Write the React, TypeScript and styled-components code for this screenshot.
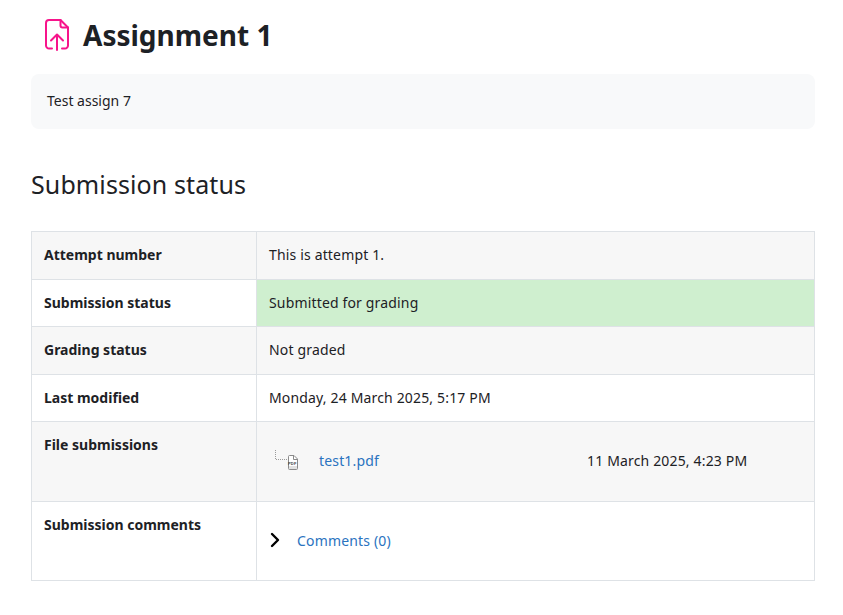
import React from "react";
import styled, { createGlobalStyle } from "styled-components";

const Global = createGlobalStyle`
  html, body { margin: 0; padding: 0; background: #fff; }
  body { font-family: "Noto Sans", "Open Sans", sans-serif; font-size: 14px; color: #1d2125; }
`;
const Page = styled.div`
  width: 784px;
  padding: 16px 0 0 31px;
`;
const Header = styled.header`
  display: flex;
  align-items: center;
  gap: 13px;
  height: 38px;
  padding-left: 13px;
`;
const Title = styled.h1`
  margin: 0;
  font-size: 28px;
  font-weight: 700;
  line-height: 38px;
`;
const Intro = styled.div`
  margin-top: 20px;
  height: 55px;
  box-sizing: border-box;
  padding: 17px 16px 0;
  line-height: 19px;
  background: #f8f9fa;
  border-radius: 8px;
`;
const Heading = styled.h2`
  margin: 38px 0 30px;
  font-size: 25px;
  font-weight: 400;
  line-height: 34px;
  letter-spacing: 0.1px;
`;
const Table = styled.table`
  width: 784px;
  border-collapse: collapse;
  table-layout: fixed;
  border: 1px solid #dee2e6;
`;
const Row = styled.tr<{ $h: number; $shade?: boolean }>`
  height: ${(p) => p.$h}px;
  background: ${(p) => (p.$shade ? "#f7f7f7" : "#fff")};
`;
const Th = styled.th<{ $top?: boolean }>`
  width: 225px;
  box-sizing: border-box;
  padding: ${(p) => (p.$top ? "13px 12px 0" : "0 12px 2px")};
  text-align: left;
  vertical-align: ${(p) => (p.$top ? "top" : "middle")};
  font-weight: 700;
  border: 1px solid #dee2e6;
`;
const Td = styled.td<{ $ok?: boolean }>`
  padding: 0 12px 2px;
  vertical-align: middle;
  letter-spacing: 0.16px;
  border: 1px solid #dee2e6;
  background: ${(p) => (p.$ok ? "#cfefcf" : "transparent")};
`;
const FileRow = styled.div`
  display: flex;
  align-items: center;
  padding-left: 6px;
`;
const FileName = styled.a`
  color: #2a73c0;
  margin-left: 20px;
  width: 268px;
`;
const FileDate = styled.span``;
const CommentRow = styled.div`
  display: flex;
  align-items: center;
  gap: 16px;
`;
const Link = styled.a`
  color: #2a73c0;
`;

const AssignIcon = () => (
  <svg width="26" height="32" viewBox="0 0 26 32" fill="none" stroke="#f7148b" strokeWidth="2" strokeLinecap="round" strokeLinejoin="round">
    <path d="M8 29.5H5a3 3 0 0 1-3-3V4a3 3 0 0 1 3-3h11.5l7.5 7.5v18a3 3 0 0 1-3 3h-3" />
    <path d="M16.5 1v5.5a2 2 0 0 0 2 2H24" />
    <path d="M13 31V16M7 21.5l6-6 6 6" />
  </svg>
);
const TreeFile = () => (
  <svg width="24" height="22" viewBox="0 0 24 22" fill="none">
    <path d="M0.5 0v9M1 9.5h11" stroke="#9a9a9a" strokeDasharray="1 1" />
    <path d="M14.5 5.5h4.5l3.5 3.5v9.5a1 1 0 0 1-1 1h-7a1 1 0 0 1-1-1v-12a1 1 0 0 1 1-1z" fill="#fff" stroke="#8a8a8a" />
    <path d="M18.5 5.5v4h4" stroke="#8a8a8a" />
    <text x="13" y="14.5" fontFamily="Liberation Sans, sans-serif" fontSize="4" fontWeight="700" fill="#444">PDF</text>
    <rect x="14" y="16" width="8" height="3" fill="#e2e2e2" />
  </svg>
);
const Chevron = () => (
  <svg width="12" height="16" viewBox="0 0 12 16" fill="none" stroke="#000" strokeWidth="2.4" strokeLinecap="round" strokeLinejoin="round">
    <path d="M3 2l6 6-6 6" />
  </svg>
);

export default function App() {
  return (
    <Page>
      <Global />
      <Header>
        <AssignIcon />
        <Title>Assignment 1</Title>
      </Header>
      <Intro>Test assign 7</Intro>
      <Heading>Submission status</Heading>
      <Table>
        <tbody>
          <Row $h={48} $shade><Th>Attempt number</Th><Td>This is attempt 1.</Td></Row>
          <Row $h={47}><Th>Submission status</Th><Td $ok>Submitted for grading</Td></Row>
          <Row $h={48} $shade><Th>Grading status</Th><Td>Not graded</Td></Row>
          <Row $h={47}><Th>Last modified</Th><Td>Monday, 24 March 2025, 5:17 PM</Td></Row>
          <Row $h={80} $shade>
            <Th $top>File submissions</Th>
            <Td>
              <FileRow>
                <TreeFile />
                <FileName>test1.pdf</FileName>
                <FileDate>11 March 2025, 4:23 PM</FileDate>
              </FileRow>
            </Td>
          </Row>
          <Row $h={79}>
            <Th $top>Submission comments</Th>
            <Td>
              <CommentRow>
                <Chevron />
                <Link>Comments (0)</Link>
              </CommentRow>
            </Td>
          </Row>
        </tbody>
      </Table>
    </Page>
  );
}
